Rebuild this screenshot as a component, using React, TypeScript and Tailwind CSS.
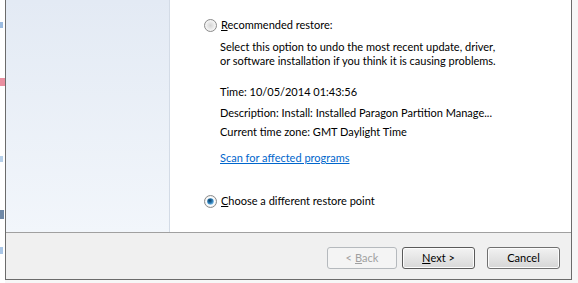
import React from 'react';

const Radio: React.FC<{ checked?: boolean }> = ({ checked }) => (
  <svg width="13" height="13" viewBox="0 0 13 13" className="shrink-0">
    <defs>
      <radialGradient id="rgOff" cx="0.5" cy="0.5" r="0.6">
        <stop offset="0" stopColor="#d4d4d4" />
        <stop offset="1" stopColor="#f7f7f7" />
      </radialGradient>
      <radialGradient id="dot" cx="0.4" cy="0.35" r="0.7">
        <stop offset="0" stopColor="#0d3a5c" />
        <stop offset="0.55" stopColor="#2a7bb5" />
        <stop offset="1" stopColor="#8fcaf0" />
      </radialGradient>
    </defs>
    <circle cx="6.5" cy="6.5" r="6" fill="#f2f2f2" stroke="#8a8a8a" strokeWidth="1" />
    <circle cx="6.5" cy="6.5" r="4.5" fill={checked ? '#ffffff' : 'url(#rgOff)'} />
    {checked && <circle cx="6.5" cy="6.5" r="3.3" fill="url(#dot)" />}
  </svg>
);

const Button: React.FC<{ children: React.ReactNode; disabled?: boolean; def?: boolean; width?: string }> = ({
  children,
  disabled,
  def,
  width = 'w-[73px]',
}) => (
  <div
    className={`${width} h-[22px] rounded-[3px] border flex items-center justify-center ${
      disabled
        ? 'border-[#b5b9bd] bg-[#f4f4f4] text-[#a0a0a0]'
        : def
        ? 'border-[#5a5a5a] bg-gradient-to-b from-[#f3f3f3] to-[#d8d8d8] text-black shadow-[inset_0_0_0_1px_#fcfcfc]'
        : 'border-[#707070] bg-gradient-to-b from-[#f2f2f2] to-[#d6d6d6] text-black shadow-[inset_0_0_0_1px_#fcfcfc]'
    }`}
  >
    {children}
  </div>
);

export default function App() {
  return (
    <div
      className="w-[578px] h-[283px] bg-[#f7f7f7] flex overflow-hidden text-[11px] text-black"
      style={{ fontFamily: 'Lato, "Noto Sans", sans-serif' }}
    >
      {/* desktop peeking at the left */}
      <div className="w-[5px] h-[283px] bg-white flex flex-col">
        <div className="h-[22px]" />
        <div className="h-[6px] w-[3px] bg-[#9bbbe0]" />
        <div className="h-[50px]" />
        <div className="h-[8px] w-[5px] bg-[#e98fa0]" />
        <div className="h-[70px]" />
        <div className="h-[6px] w-[3px] bg-[#b5cfe9]" />
        <div className="h-[48px]" />
        <div className="h-[9px] w-[4px] bg-[#6f88a6]" />
        <div className="h-[28px]" />
        <div className="h-[7px] w-[3px] bg-[#a9c6e6]" />
      </div>

      {/* dialog window */}
      <div className="w-[567px] h-[280px] bg-white border-l border-r border-b border-[#6b6b6b] flex flex-col">
        <div className="h-[232px] flex">
          <div className="w-[164px] bg-gradient-to-b from-[#e3eaf4] to-[#f2f6fb] border-r border-[#d3dbe6]" />
          <div className="flex-1 pl-[34px] pt-[18px] flex flex-col leading-[14px]">
            <div className="h-[14px] flex items-center gap-[4px]">
              <Radio />
              <span>
                <span className="underline">R</span>ecommended restore:
              </span>
            </div>
            <div className="pl-[16px] mt-[8px] flex flex-col">
              <div className="h-[14px]">Select this option to undo the most recent update, driver,</div>
              <div className="h-[14px]">or software installation if you think it is causing problems.</div>
              <div className="h-[14px] mt-[17px]">Time: 10/05/2014 01:43:56</div>
              <div className="h-[14px] mt-[7px]">Description: Install: Installed Paragon Partition Manage...</div>
              <div className="h-[14px] mt-[5px]">Current time zone: GMT Daylight Time</div>
              <div className="h-[14px] mt-[12px]">
                <span className="text-[#0066cc] underline">Scan for affected programs</span>
              </div>
            </div>
            <div className="h-[14px] flex items-center gap-[4px] mt-[29px]">
              <Radio checked />
              <span>
                <span className="underline">C</span>hoose a different restore point
              </span>
            </div>
          </div>
        </div>
        <div className="flex-1 border-t border-[#a0a0a0] bg-[#f0f0f0] flex items-start justify-end pt-[14px] pr-[11px]">
          <Button disabled width="w-[70px]">
            &lt; <span className="underline ml-[3px]">B</span>ack
          </Button>
          <div className="w-[5px]" />
          <Button def>
            <span className="underline">N</span>ext &gt;
          </Button>
          <div className="w-[12px]" />
          <Button>Cancel</Button>
        </div>
      </div>
    </div>
  );
}
